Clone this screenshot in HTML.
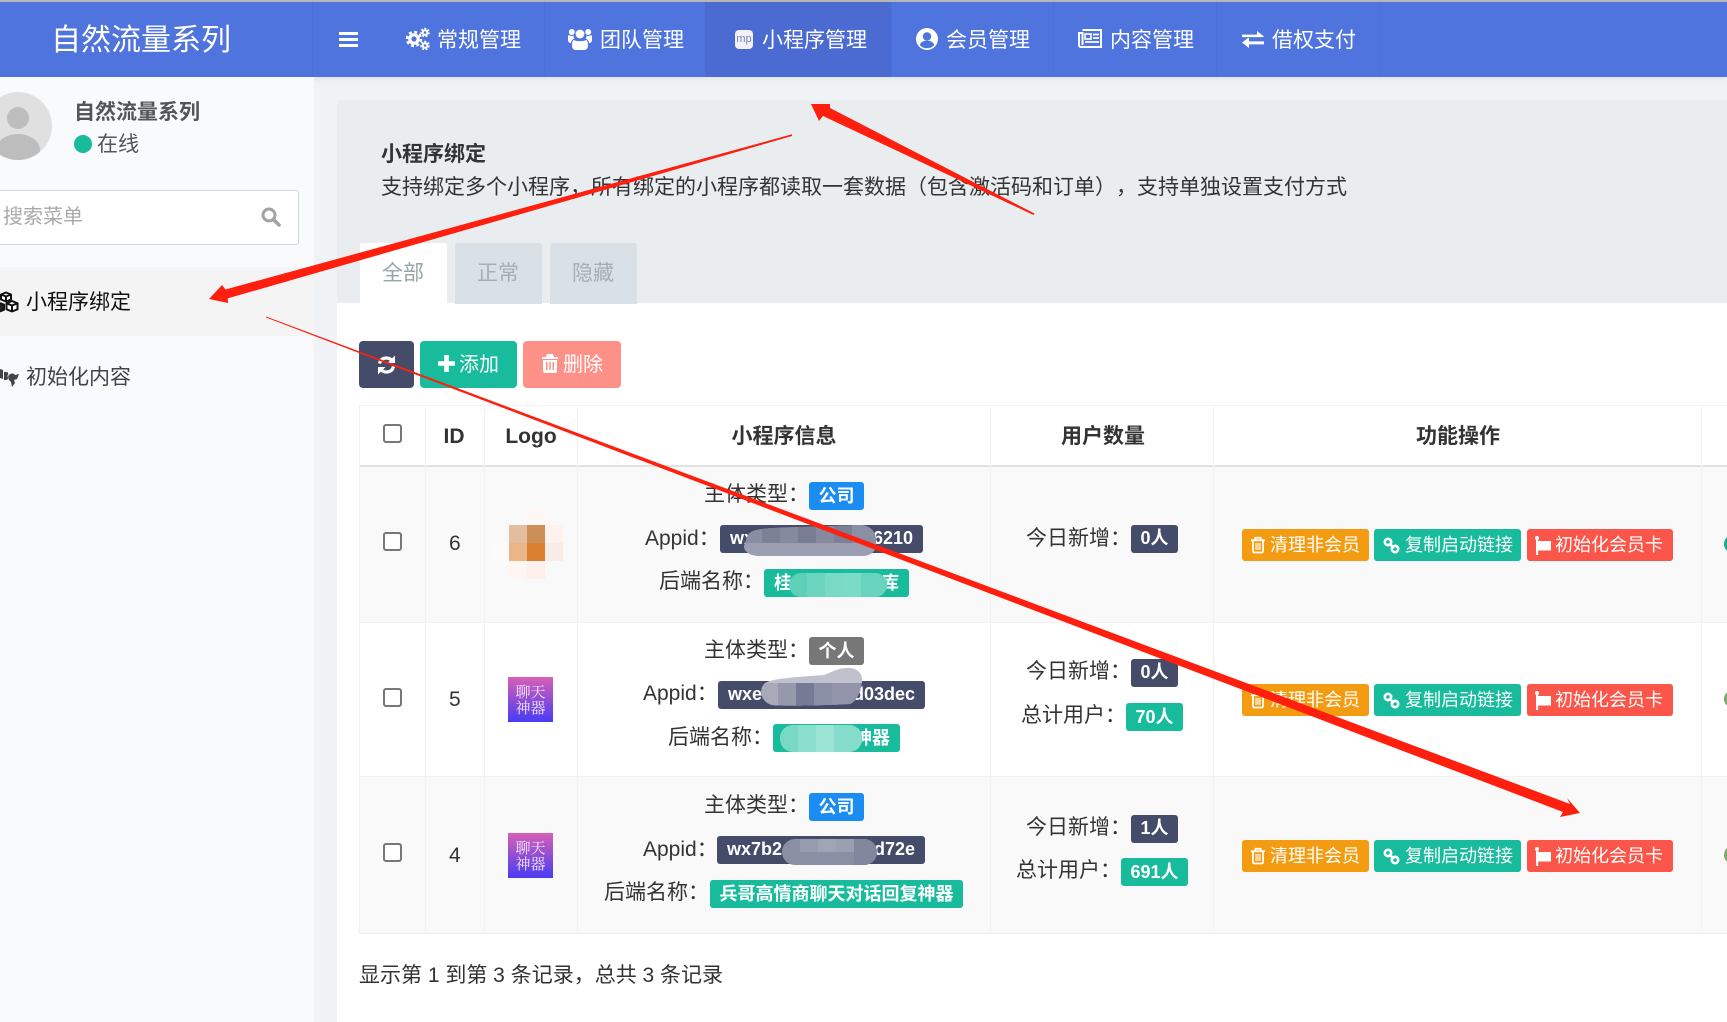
<!DOCTYPE html>
<html lang="zh-CN"><head><meta charset="utf-8"><title>小程序绑定</title>
<style>
html,body{margin:0;padding:0;width:1727px;height:1022px;overflow:hidden;background:#eff3f6}
body{position:relative;font-family:"Liberation Sans","Noto Sans CJK SC",sans-serif;font-size:21px;color:#333;text-spacing-trim:space-all}
.b{position:absolute}
.t{position:absolute;white-space:nowrap;line-height:28px;height:28px}
.n{color:#fff}
.l{position:absolute;height:28px;line-height:28px;color:#fff;font-weight:700;font-size:18px;border-radius:3px;text-align:center;white-space:nowrap}
.up{line-height:26px}
.sp{display:flex;justify-content:space-between;padding:0 10px;box-sizing:border-box}
.cb{position:absolute;width:15px;height:15px;border:2px solid #777;border-radius:3px;background:#fff}
.th{position:absolute;top:423px;font-weight:700;line-height:28px;transform:translateX(-50%);white-space:nowrap;color:#333}
.btn{position:absolute;height:32px;border-radius:3px;color:#fff;font-size:18px;line-height:32px;white-space:nowrap}
.btn span{position:absolute;top:0}
.btn svg{position:absolute}
svg{display:block;overflow:visible}
</style></head><body>

<div class="b" style="left:0;top:0;width:1727px;height:2px;background:#b8b8b8"></div>
<div class="b" style="left:0;top:2px;width:1727px;height:75px;background:#4f74de;box-shadow:0 2px 6px rgba(0,0,0,.07)"></div>
<div class="b" style="left:705px;top:2px;width:186px;height:75px;background:#4b6bd3"></div>
<div class="b" style="left:312px;top:2px;width:1px;height:75px;background:#4c70da"></div>
<div class="b" style="left:544px;top:2px;width:1px;height:75px;background:#4c70da"></div>
<div class="b" style="left:891px;top:2px;width:1px;height:75px;background:#4c70da"></div>
<div class="b" style="left:1053px;top:2px;width:1px;height:75px;background:#4c70da"></div>
<div class="b" style="left:1216px;top:2px;width:1px;height:75px;background:#4c70da"></div>
<div class="b" style="left:1379px;top:2px;width:1px;height:75px;background:#4c70da"></div>

<div class="t n" style="left:51px;top:27px;font-size:30px">自然流量系列</div>
<div class="b" style="left:339px;top:32px;width:19px;height:3px;background:#fff"></div>
<div class="b" style="left:339px;top:38px;width:19px;height:3px;background:#fff"></div>
<div class="b" style="left:339px;top:44px;width:19px;height:3px;background:#fff"></div>

<svg class="b" style="left:406px;top:28px" width="24" height="22" viewBox="0 0 24 22">
<circle cx="8" cy="11" r="4.2" fill="none" stroke="#fff" stroke-width="3.2"/><circle cx="8" cy="11" r="7" fill="none" stroke="#fff" stroke-width="2.4" stroke-dasharray="3 2.5"/>
<circle cx="19" cy="4.5" r="2.3" fill="none" stroke="#fff" stroke-width="2"/><circle cx="19" cy="4.5" r="4" fill="none" stroke="#fff" stroke-width="1.6" stroke-dasharray="2 1.6"/>
<circle cx="19" cy="17.5" r="2.3" fill="none" stroke="#fff" stroke-width="2"/><circle cx="19" cy="17.5" r="4" fill="none" stroke="#fff" stroke-width="1.6" stroke-dasharray="2 1.6"/></svg>
<div class="t n" style="left:437px;top:27px">常规管理</div>

<svg class="b" style="left:568px;top:28px" width="24" height="22" viewBox="0 0 24 22" fill="#fff">
<circle cx="12" cy="6" r="4.4"/><circle cx="3.8" cy="4" r="3"/><circle cx="20.2" cy="4" r="3"/>
<path d="M6 12c2 1.6 10 1.6 12 0 1.6.6 2 3 2 5.5 0 2.5-1.6 4.5-3.5 4.5h-9C5.600 22 4 20 4 17.500 4 15 4.400 12.600 6 12z"/>
<path d="M0 8.500c0-1 .6-1.500 1-1.500 1 1 3 1.200 4.500.6-.2 1 .4 2 1 2.900-2 .6-3.200 2.200-3.500 4.500C1.400 15 0 14 0 12z"/>
<path d="M24 8.500c0-1-.6-1.500-1-1.500-1 1-3 1.200-4.500.6.200 1-.4 2-1 2.900 2 .6 3.200 2.200 3.500 4.500 1.600 0 3-1 3-3z"/></svg>
<div class="t n" style="left:600px;top:27px">团队管理</div>

<div class="b" style="left:735px;top:30px;width:18px;height:19px;border-radius:4px;background:#f1f1f6"></div>
<div class="b" style="left:735px;top:30px;width:18px;height:19px;line-height:19px;text-align:center;font-size:11px;color:#7d7fc4">mp</div>
<div class="t n" style="left:762px;top:27px">小程序管理</div>

<svg class="b" style="left:916px;top:28px" width="22" height="22" viewBox="0 0 22 22">
<circle cx="11" cy="11" r="11" fill="#fff"/><circle cx="11" cy="8.500" r="4.200" fill="#4f74de"/><path d="M3.800 17c1-3 3.500-4.200 7.200-4.200s6.200 1.200 7.200 4.200C16.500 19.300 14 20.200 11 20.200S5.500 19.300 3.800 17z" fill="#4f74de"/></svg>
<div class="t n" style="left:946px;top:27px">会员管理</div>

<svg class="b" style="left:1078px;top:29px" width="24" height="19" viewBox="0 0 24 19" fill="none" stroke="#fff">
<path d="M4.500 1h18.500v17H2.500C1.500 18 1 17 1 16V4h3.500v12" stroke-width="2"/><rect x="7" y="5" width="6" height="5" stroke-width="1.600"/><path d="M15 5.500h6M15 9h6M7 13h14" stroke-width="1.800"/></svg>
<div class="t n" style="left:1110px;top:27px">内容管理</div>

<svg class="b" style="left:1242px;top:31px" width="22" height="17" viewBox="0 0 22 17" fill="#fff">
<path d="M0 3.600h15V0l7 5.500-1 .6H0zM22 10.400H7V7H6L0 11.500 7 17v-3.600h15z"/></svg>
<div class="t n" style="left:1272px;top:27px">借权支付</div>

<!-- sidebar -->
<div class="b" style="left:0;top:77px;width:314px;height:945px;background:#f9fafc"></div>
<svg class="b" style="left:0;top:92px" width="60" height="70" viewBox="0 0 60 70">
<defs><clipPath id="av"><circle cx="18" cy="34" r="34"/></clipPath></defs>
<circle cx="18" cy="34" r="34" fill="#e0e0e0"/><g clip-path="url(#av)"><circle cx="18" cy="26" r="11" fill="#bdbdbd"/><ellipse cx="18" cy="58" rx="22" ry="16" fill="#bdbdbd"/></g></svg>
<div class="t" style="left:74px;top:99px;font-weight:700;color:#555">自然流量系列</div>
<div class="b" style="left:74px;top:135px;width:18px;height:18px;border-radius:50%;background:#18bc9c"></div>
<div class="t" style="left:97px;top:131px;color:#555">在线</div>
<div class="b" style="left:-3px;top:190px;width:300px;height:53px;background:#fff;border:1px solid #d2d6de;border-radius:3px"></div>
<div class="t" style="left:3px;top:203px;color:#aaa;font-size:20px">搜索菜单</div>
<svg class="b" style="left:261px;top:207px" width="20" height="20" viewBox="0 0 20 20" fill="none" stroke="#a3a3a3"><circle cx="8" cy="8" r="6" stroke-width="3"/><path d="M12.500 12.500L18 18" stroke-width="3.600" stroke-linecap="round"/></svg>
<div class="b" style="left:0;top:267px;width:314px;height:69px;background:#f4f4f5"></div>
<svg class="b" style="left:0;top:291px" width="19" height="22" viewBox="0 0 19 22" fill="none" stroke="#111" stroke-width="2" stroke-linejoin="round">
<path d="M6 1.500l5 2v5l-5 2-5-2v-5zM1 3.500l5 2 5-2M6 5.500V10" fill="#fff"/>
<path d="M12 10l5.500 2.300v6l-5.500 2.200-5.500-2.200v-6zM6.500 12.300l5.500 2.200 5.500-2.200M12 14.500v6" fill="#fff"/>
<path d="M0 12l4 1.700v5L0 20.400" fill="#222"/></svg>
<div class="t" style="left:26px;top:289px;color:#111">小程序绑定</div>
<svg class="b" style="left:0;top:366px" width="20" height="22" viewBox="0 0 20 22" fill="#444">
<path d="M0 3l3 1v9l-3-1zM4 6h2.500c2 0 2.500 3 .5 4 2 1 1 4-1 4H4z"/><path d="M9 9c2-2 5-2 6 0l4-1-2 5-3 1 1 3-3 4-1-5-2-2c-1-2-1-4 0-5z"/></svg>
<div class="t" style="left:26px;top:364px;color:#444">初始化内容</div>

<!-- panel -->
<div class="b" style="left:337px;top:100px;width:1390px;height:203px;background:#e9edf0;border-radius:3px 0 0 0"></div>
<div class="t" style="left:381px;top:141px;font-weight:700;color:#333">小程序绑定</div>
<div class="t" style="left:381px;top:174px;color:#333">支持绑定多个小程序，所有绑定的小程序都读取一套数据（包含激活码和订单），支持单独设置支付方式</div>
<div class="b" style="left:337px;top:303px;width:1390px;height:719px;background:#fff"></div>
<div class="b" style="left:360px;top:243px;width:87px;height:61px;background:#fff;border-radius:3px 3px 0 0"></div>
<div class="b" style="left:455px;top:243px;width:87px;height:61px;background:#d9e0e6;border-radius:3px 3px 0 0"></div>
<div class="b" style="left:550px;top:243px;width:87px;height:61px;background:#d9e0e6;border-radius:3px 3px 0 0"></div>
<div class="t" style="left:382px;top:260px;color:#95a5a6">全部</div>
<div class="t" style="left:477px;top:260px;color:#a3b0b5">正常</div>
<div class="t" style="left:572px;top:260px;color:#a3b0b5">隐藏</div>

<!-- toolbar -->
<div class="b" style="left:359px;top:341px;width:55px;height:47px;background:#444c69;border-radius:4px"></div>
<svg class="b" style="left:377px;top:355px" width="19" height="20" viewBox="0 0 19 20" fill="none" stroke="#fff" stroke-width="3.200">
<path d="M2.500 8.500C3.500 4.500 6 3 9.500 3c2.500 0 4.200 1 5.500 2.500"/><path d="M16.500 11.500C15.500 15.500 13 17 9.500 17 7 17 5.300 16 4 14.500"/>
<path d="M18 0.500V8h-7.500z" fill="#fff" stroke="none"/><path d="M1 19.500V12h7.500z" fill="#fff" stroke="none"/></svg>
<div class="b" style="left:420px;top:341px;width:97px;height:47px;background:#18bc9c;border-radius:4px"></div>
<svg class="b" style="left:438px;top:355px" width="17" height="17" viewBox="0 0 17 17" fill="#fff"><path d="M6.200 0h4.600v6.200H17v4.600h-6.200V17H6.200v-6.200H0V6.200h6.200z"/></svg>
<div class="t n" style="left:459px;top:351px;font-size:20px">添加</div>
<div class="b" style="left:523px;top:341px;width:98px;height:47px;background:#fd9188;border-radius:4px"></div>
<svg class="b" style="left:542px;top:354px" width="16" height="19" viewBox="0 0 16 19" fill="#fff"><path d="M5 0h6l1 3h4v2H0V3h4zM1 6h14v11c0 1-.8 2-2 2H3c-1.200 0-2-1-2-2zm3 2v8h1.500V8zm3.300 0v8h1.500V8zm3.200 0v8H12V8z" fill-rule="evenodd"/></svg>
<div class="t n" style="left:563px;top:351px;font-size:20px">删除</div>

<!-- table -->
<div class="b" style="left:359px;top:405px;width:1368px;height:61px;background:#fff"></div>
<div class="b" style="left:359px;top:466px;width:1368px;height:157px;background:#f9f9f9"></div>
<div class="b" style="left:359px;top:623px;width:1368px;height:154px;background:#fff"></div>
<div class="b" style="left:359px;top:777px;width:1368px;height:156px;background:#f9f9f9"></div>
<div class="b" style="left:359px;top:405px;width:1368px;height:1px;background:#f2f2f2"></div>
<div class="b" style="left:359px;top:465px;width:1368px;height:2px;background:#e2e2e2"></div>
<div class="b" style="left:359px;top:622px;width:1368px;height:1px;background:#f2f2f2"></div>
<div class="b" style="left:359px;top:776px;width:1368px;height:1px;background:#f2f2f2"></div>
<div class="b" style="left:359px;top:933px;width:1368px;height:1px;background:#f0f0f0"></div>
<div class="b" style="left:359px;top:405px;width:1px;height:528px;background:#f2f2f2"></div>
<div class="b" style="left:425px;top:405px;width:1px;height:528px;background:#f2f2f2"></div>
<div class="b" style="left:484px;top:405px;width:1px;height:528px;background:#f2f2f2"></div>
<div class="b" style="left:577px;top:405px;width:1px;height:528px;background:#f2f2f2"></div>
<div class="b" style="left:990px;top:405px;width:1px;height:528px;background:#f2f2f2"></div>
<div class="b" style="left:1213px;top:405px;width:1px;height:528px;background:#f2f2f2"></div>
<div class="b" style="left:1701px;top:405px;width:1px;height:528px;background:#f2f2f2"></div>

<div class="cb" style="left:383px;top:424px"></div>
<div class="th" style="left:454px">ID</div>
<div class="th" style="left:531px">Logo</div>
<div class="th" style="left:784px">小程序信息</div>
<div class="th" style="left:1103px">用户数量</div>
<div class="th" style="left:1458px">功能操作</div>

<div class="cb" style="left:383px;top:532px"></div>
<div class="cb" style="left:383px;top:688px"></div>
<div class="cb" style="left:383px;top:843px"></div>
<div class="t" style="left:449px;top:530px">6</div>
<div class="t" style="left:449px;top:686px">5</div>
<div class="t" style="left:449px;top:842px">4</div>

<!-- logos -->
<svg class="b" style="left:491px;top:508px" width="80" height="72" viewBox="0 0 80 72">
<rect x="36" y="0" width="18" height="17" fill="#fdf8f6"/>
<rect x="18" y="17" width="18" height="18" fill="#e4bda0"/><rect x="36" y="17" width="18" height="18" fill="#cc8f55"/><rect x="54" y="17" width="18" height="18" fill="#fdf2ee"/>
<rect x="0" y="35" width="18" height="18" fill="#fbfbfa"/><rect x="18" y="35" width="18" height="18" fill="#ebb489"/><rect x="36" y="35" width="18" height="18" fill="#db8031"/><rect x="54" y="35" width="18" height="18" fill="#f7ece6"/>
<rect x="18" y="53" width="18" height="18" fill="#fdf6f3"/><rect x="36" y="53" width="18" height="18" fill="#fdf0ec"/></svg>
<div class="b" style="left:508px;top:677px;width:45px;height:45px;background:linear-gradient(#d860b6,#483cf2);color:#f6e6ff;font-size:15px;line-height:16px;text-align:center;font-family:'Noto Serif CJK SC',serif;padding-top:7px;box-sizing:border-box">聊天<br>神器</div>
<div class="b" style="left:508px;top:833px;width:45px;height:45px;background:linear-gradient(#d860b6,#483cf2);color:#f6e6ff;font-size:15px;line-height:16px;text-align:center;font-family:'Noto Serif CJK SC',serif;padding-top:7px;box-sizing:border-box">聊天<br>神器</div>

<!-- info row 1 -->
<div class="t" style="left:704px;top:481px">主体类型：</div>
<div class="l" style="left:809px;top:482px;width:55px;background:#1b8cf2">公司</div>
<div class="t" style="left:645px;top:525px">Appid：</div>
<div class="l sp up" style="left:720px;top:525px;width:203px;background:#444c69"><span>wx</span><span>6210</span></div>
<div class="t" style="left:659px;top:568px">后端名称：</div>
<div class="l sp" style="left:764px;top:569px;width:145px;background:#18bc9c"><span>桂</span><span>库</span></div>
<!-- info row 2 -->
<div class="t" style="left:704px;top:637px">主体类型：</div>
<div class="l" style="left:809px;top:637px;width:55px;background:#777">个人</div>
<div class="t" style="left:643px;top:680px">Appid：</div>
<div class="l sp up" style="left:718px;top:681px;width:207px;background:#444c69"><span>wxe</span><span>d03dec</span></div>
<div class="t" style="left:668px;top:724px">后端名称：</div>
<div class="l sp" style="left:773px;top:724px;width:127px;background:#18bc9c"><span></span><span>神器</span></div>
<!-- info row 3 -->
<div class="t" style="left:704px;top:792px">主体类型：</div>
<div class="l" style="left:809px;top:793px;width:55px;background:#1b8cf2">公司</div>
<div class="t" style="left:643px;top:836px">Appid：</div>
<div class="l sp up" style="left:717px;top:836px;width:208px;background:#444c69"><span>wx7b2</span><span>d72e</span></div>
<div class="t" style="left:604px;top:879px">后端名称：</div>
<div class="l" style="left:710px;top:880px;width:253px;background:#18bc9c">兵哥高情商聊天对话回复神器</div>

<!-- mosaic blobs -->
<svg class="b" style="left:0;top:0" width="1727" height="1022" viewBox="0 0 1727 1022">
<defs>
<clipPath id="c1"><path d="M748 535C752 528 770 528 800 527L860 525C868 525 876 530 876 540V545C876 552 870 556 862 556H760C750 556 744 552 744 546z"/></clipPath>
<clipPath id="c2"><rect x="789" y="573" width="98" height="24" rx="12"/></clipPath>
<clipPath id="c3"><path d="M764 684C770 678 800 677 824 675 832 672 838 668 848 668 858 668 863 674 862 682 860 692 858 700 850 704 810 706 780 706 772 705 762 702 758 692 764 684z"/></clipPath>
<clipPath id="c4"><rect x="780" y="725" width="82" height="27" rx="13"/></clipPath>
<clipPath id="c5"><rect x="782" y="839" width="95" height="26" rx="13"/></clipPath>
</defs>
<g clip-path="url(#c1)">
<rect x="744" y="524" width="136" height="34" fill="#9a9eb0"/>
<rect x="744" y="524" width="18" height="19" fill="#8a8ea3"/><rect x="762" y="524" width="18" height="19" fill="#7d8196"/><rect x="780" y="524" width="18" height="19" fill="#858a9d"/><rect x="798" y="524" width="18" height="19" fill="#797d93"/><rect x="816" y="524" width="18" height="19" fill="#858a9e"/><rect x="834" y="524" width="18" height="19" fill="#7c8096"/><rect x="852" y="524" width="24" height="19" fill="#8b8fa3"/></g>
<g clip-path="url(#c2)">
<rect x="789" y="573" width="98" height="24" fill="#5ed0b8"/><rect x="807" y="573" width="18" height="24" fill="#6cd5be"/><rect x="825" y="573" width="18" height="24" fill="#78dac5"/><rect x="843" y="573" width="18" height="24" fill="#7adbc6"/><rect x="861" y="573" width="26" height="24" fill="#68d4bd"/></g>
<g clip-path="url(#c3)">
<rect x="760" y="666" width="105" height="42" fill="#bfc1cd"/>
<rect x="760" y="683" width="18" height="24" fill="#a8aaba"/><rect x="778" y="683" width="18" height="24" fill="#9699ac"/><rect x="796" y="683" width="18" height="24" fill="#767b95"/><rect x="814" y="683" width="18" height="24" fill="#8b8fa6"/><rect x="832" y="683" width="30" height="24" fill="#9295a9"/></g>
<g clip-path="url(#c4)">
<rect x="780" y="725" width="82" height="27" fill="#7ad9c5"/><rect x="798" y="725" width="18" height="27" fill="#8bdfce"/><rect x="816" y="725" width="18" height="27" fill="#9be4d5"/><rect x="834" y="725" width="28" height="27" fill="#85dccb"/></g>
<g clip-path="url(#c5)">
<rect x="782" y="839" width="95" height="26" fill="#8b8fa3"/><rect x="800" y="839" width="18" height="13" fill="#989caf"/><rect x="818" y="839" width="18" height="13" fill="#a0a4b5"/><rect x="836" y="839" width="18" height="13" fill="#9b9fb1"/><rect x="854" y="839" width="23" height="26" fill="#83879d"/></g>
</svg>

<!-- users -->
<div class="t" style="left:1026px;top:525px">今日新增：</div>
<div class="l up" style="left:1131px;top:525px;width:47px;background:#444c69">0人</div>
<div class="t" style="left:1026px;top:658px">今日新增：</div>
<div class="l up" style="left:1131px;top:659px;width:47px;background:#444c69">0人</div>
<div class="t" style="left:1021px;top:702px">总计用户：</div>
<div class="l" style="left:1126px;top:703px;width:57px;background:#18bc9c">70人</div>
<div class="t" style="left:1026px;top:814px">今日新增：</div>
<div class="l up" style="left:1131px;top:815px;width:47px;background:#444c69">1人</div>
<div class="t" style="left:1016px;top:857px">总计用户：</div>
<div class="l" style="left:1121px;top:858px;width:67px;background:#18bc9c">691人</div>

<!-- action buttons: row 1 -->
<div class="btn" style="left:1242px;top:529px;width:127px;background:#f39c12"><svg style="left:9px;top:7px" width="14" height="18" viewBox="0 0 16 19" fill="none" stroke="#fff"><path d="M0 4h16M5 4V1.200h6V4" stroke-width="2"/><path d="M2.200 4.500V16.500c0 1 .8 1.500 1.500 1.500h8.600c.7 0 1.500-.5 1.500-1.500V4.500" stroke-width="2"/><path d="M5.800 7v8M8 7v8M10.200 7v8" stroke-width="1.300"/></svg><span style="left:28px">清理非会员</span></div>
<div class="btn" style="left:1374px;top:529px;width:147px;background:#18bc9c"><svg style="left:9px;top:8px" width="17" height="17" viewBox="0 0 17 17" fill="none" stroke="#fff" stroke-width="2.600"><circle cx="5" cy="5" r="3.200"/><circle cx="12" cy="12" r="3.200"/><path d="M6 6l5 5"/></svg><span style="left:31px">复制启动链接</span></div>
<div class="btn" style="left:1527px;top:529px;width:146px;background:#fc5549"><svg style="left:8px;top:7px" width="16" height="19" viewBox="0 0 16 19" fill="#fff"><circle cx="2" cy="2" r="2"/><rect x="1" y="2" width="2.200" height="17"/><path d="M3 5h13v9.500H3z"/></svg><span style="left:28px">初始化会员卡</span></div>
<!-- row 2 -->
<div class="btn" style="left:1242px;top:684px;width:127px;background:#f39c12"><svg style="left:9px;top:7px" width="14" height="18" viewBox="0 0 16 19" fill="none" stroke="#fff"><path d="M0 4h16M5 4V1.200h6V4" stroke-width="2"/><path d="M2.200 4.500V16.500c0 1 .8 1.500 1.500 1.500h8.600c.7 0 1.500-.5 1.500-1.500V4.500" stroke-width="2"/><path d="M5.800 7v8M8 7v8M10.200 7v8" stroke-width="1.300"/></svg><span style="left:28px">清理非会员</span></div>
<div class="btn" style="left:1374px;top:684px;width:147px;background:#18bc9c"><svg style="left:9px;top:8px" width="17" height="17" viewBox="0 0 17 17" fill="none" stroke="#fff" stroke-width="2.600"><circle cx="5" cy="5" r="3.200"/><circle cx="12" cy="12" r="3.200"/><path d="M6 6l5 5"/></svg><span style="left:31px">复制启动链接</span></div>
<div class="btn" style="left:1527px;top:684px;width:146px;background:#fc5549"><svg style="left:8px;top:7px" width="16" height="19" viewBox="0 0 16 19" fill="#fff"><circle cx="2" cy="2" r="2"/><rect x="1" y="2" width="2.200" height="17"/><path d="M3 5h13v9.500H3z"/></svg><span style="left:28px">初始化会员卡</span></div>
<!-- row 3 -->
<div class="btn" style="left:1242px;top:840px;width:127px;background:#f39c12"><svg style="left:9px;top:7px" width="14" height="18" viewBox="0 0 16 19" fill="none" stroke="#fff"><path d="M0 4h16M5 4V1.200h6V4" stroke-width="2"/><path d="M2.200 4.500V16.500c0 1 .8 1.500 1.500 1.500h8.600c.7 0 1.500-.5 1.500-1.500V4.500" stroke-width="2"/><path d="M5.800 7v8M8 7v8M10.200 7v8" stroke-width="1.300"/></svg><span style="left:28px">清理非会员</span></div>
<div class="btn" style="left:1374px;top:840px;width:147px;background:#18bc9c"><svg style="left:9px;top:8px" width="17" height="17" viewBox="0 0 17 17" fill="none" stroke="#fff" stroke-width="2.600"><circle cx="5" cy="5" r="3.200"/><circle cx="12" cy="12" r="3.200"/><path d="M6 6l5 5"/></svg><span style="left:31px">复制启动链接</span></div>
<div class="btn" style="left:1527px;top:840px;width:146px;background:#fc5549"><svg style="left:8px;top:7px" width="16" height="19" viewBox="0 0 16 19" fill="#fff"><circle cx="2" cy="2" r="2"/><rect x="1" y="2" width="2.200" height="17"/><path d="M3 5h13v9.500H3z"/></svg><span style="left:28px">初始化会员卡</span></div>

<div class="b" style="left:1724px;top:535px;width:18px;height:18px;border-radius:50%;background:#18a98c"></div>
<div class="b" style="left:1724px;top:690px;width:18px;height:18px;border-radius:50%;background:#7fa86d"></div>
<div class="b" style="left:1724px;top:846px;width:18px;height:18px;border-radius:50%;background:#7fa86d"></div>

<div class="t" style="left:359px;top:962px;color:#333">显示第 1 到第 3 条记录，总共 3 条记录</div>

<!-- annotation arrows -->
<svg class="b" style="left:0;top:0;pointer-events:none" width="1727" height="1022" viewBox="0 0 1727 1022" fill="#fe1f0e">
<polygon points="1034.500,213.500 830,108 830,104 811,104 819,121 823,116 1033.500,215"/>
<polygon points="792,134.300 225.500,289.500 222,285 209,299 228,303 227.700,298.400 792,136"/>
<polygon points="266,316.500 1570,804 1567,798 1580,813 1560,817 1563,812 266,317.500"/>
</svg>
</body></html>
